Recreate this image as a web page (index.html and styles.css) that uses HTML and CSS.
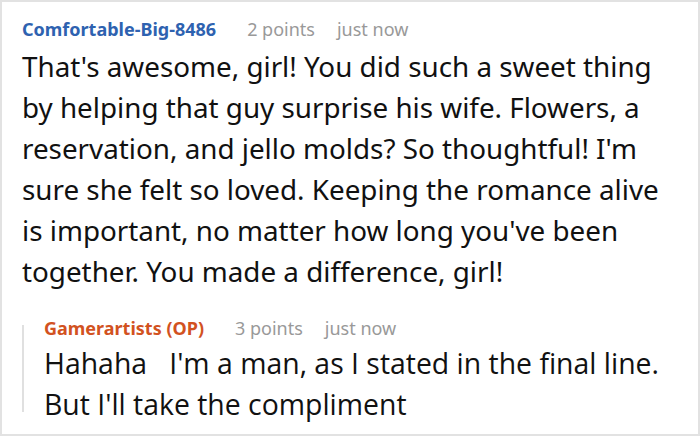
FILE: index.html
```html
<!DOCTYPE html>
<html>
<head>
<meta charset="utf-8">
<link rel="stylesheet" href="styles.css">
</head>
<body>
<div class="frame">
  <div class="comment">
    <div class="meta">
      <span class="author">Comfortable-Big-8486</span>
      <span class="info">2 points</span>
      <span class="info">just now</span>
    </div>
    <p class="body">That's awesome, girl! You did such a sweet thing by helping that guy surprise his wife. Flowers, a reservation, and jello molds? So thoughtful! I'm sure she felt so loved. Keeping the romance alive is important, no matter how long you've been together. You made a difference, girl!</p>
    <div class="reply">
      <div class="meta">
        <span class="author op">Gamerartists (OP)</span>
        <span class="info">3 points</span>
        <span class="info">just now</span>
      </div>
      <p class="body cond">Hahaha &nbsp; I'm a man, as I stated in the final line.<br>But I'll take the compliment</p>
    </div>
  </div>
</div>
</body>
</html>
```
FILE: styles.css
```css
html, body {
  margin: 0;
  padding: 0;
  background: #fff;
}
.frame {
  width: 700px;
  height: 436px;
  box-sizing: border-box;
  border: 2px solid #e2e2e2;
  overflow: hidden;
  font-family: "Noto Sans", "Open Sans", sans-serif;
}
.comment {
  padding: 15px 0 0 20px;
}
.meta {
  display: flex;
  gap: 22px;
  font-size: 18px;
  line-height: 24px;
}
.author {
  font-weight: 700;
  color: #2e62b0;
  margin-right: 9px;
}
.author.op {
  color: #d2521f;
}
.info {
  color: #999;
}
.body {
  margin: 5px 0 0 0;
  font-size: 27.8px;
  line-height: 41px;
  color: #111;
  width: 650px;
}
.reply {
  position: relative;
  margin-top: 24px;
  padding-left: 22px;
}
.reply::before {
  content: "";
  position: absolute;
  left: 0;
  top: 9px;
  bottom: 13px;
  width: 2px;
  background: #e0e0e0;
}
.cond {
  font-family: "Open Sans", sans-serif;
  font-size: 28.4px;
  line-height: 41px;
  margin-top: 3px;
}
```
